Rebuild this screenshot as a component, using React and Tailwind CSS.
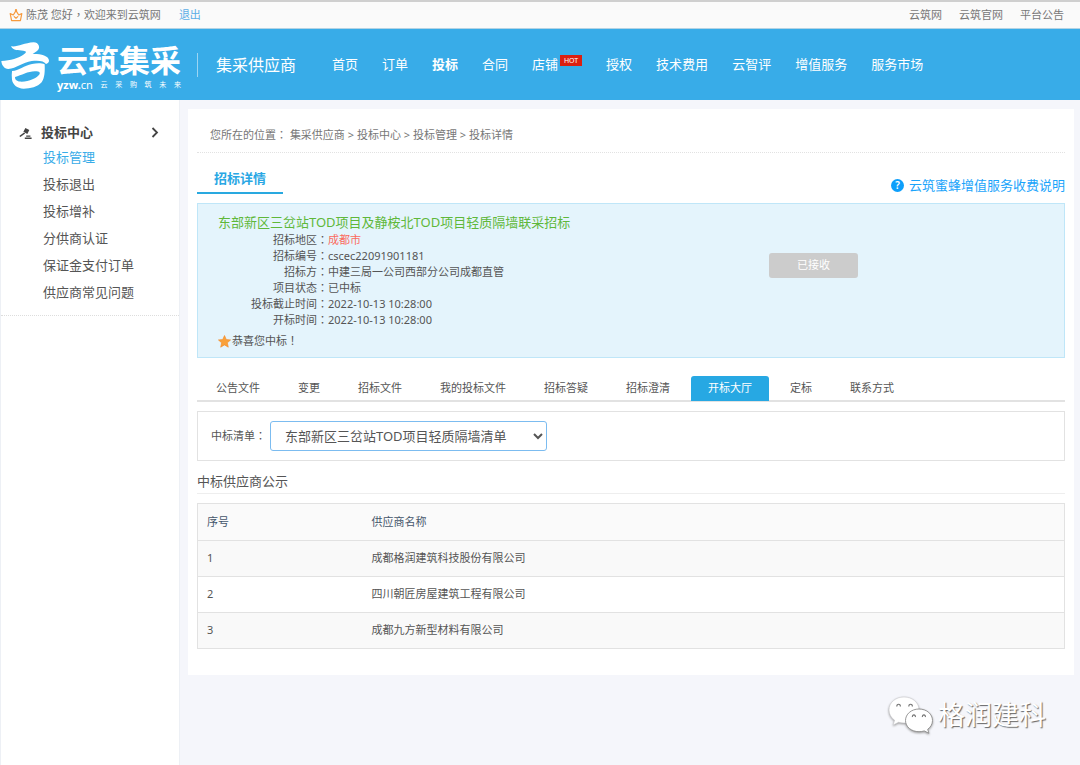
import React, { useState } from "react";

const navItems = [
  { label: "首页" },
  { label: "订单" },
  { label: "投标", active: true },
  { label: "合同" },
  { label: "店铺", hot: true },
  { label: "授权" },
  { label: "技术费用" },
  { label: "云智评" },
  { label: "增值服务" },
  { label: "服务市场" },
];

const sideItems = ["投标管理", "投标退出", "投标增补", "分供商认证", "保证金支付订单", "供应商常见问题"];

const crumbs = ["集采供应商", "投标中心", "投标管理", "投标详情"];

const details = [
  { label: "招标地区", value: "成都市", red: true },
  { label: "招标编号", value: "cscec22091901181" },
  { label: "招标方", value: "中建三局一公司西部分公司成都直管" },
  { label: "项目状态", value: "已中标" },
  { label: "投标截止时间", value: "2022-10-13 10:28:00" },
  { label: "开标时间", value: "2022-10-13 10:28:00" },
];

const tabs = ["公告文件", "变更", "招标文件", "我的投标文件", "招标答疑", "招标澄清", "开标大厅", "定标", "联系方式"];

const suppliers = ["成都格润建筑科技股份有限公司", "四川朝匠房屋建筑工程有限公司", "成都九方新型材料有限公司"];

// punctuation centred in its full-width cell
function Mark({ children }) {
  return <span lang="zh-TW" className="font-['Noto_Sans_CJK_TC',sans-serif] leading-none">{children}</span>;
}

function CrownIcon() {
  return (
    <svg className="w-[14px] h-[13px]" viewBox="0 0 14 13" fill="none" stroke="#f79a3e" strokeWidth="1.2" strokeLinejoin="round" strokeLinecap="round">
      <path d="M2.6 11.6 1.2 4.6 4.3 6 7 1.6 9.7 6l3.1-1.4-1.4 7z" />
      <path d="M5.2 7.6 7 9.2l1.8-1.6" />
      <circle cx="7" cy="1.3" r=".6" />
    </svg>
  );
}

function LogoMark() {
  return (
    <svg className="w-[49px] h-[48px] shrink-0" viewBox="0 124 147 144" fill="#fff">
      <path d="M33 140c20 3 38-10 68-12 8 0 12 4 15 9 3 7 1 12-5 17l-13 9c20-1 49 4 49 20 0 5-4 8-9 10-5-9-22-12-43-9-27 4-46 22-70 24C12 207 5 196 4 184c28-1 51-8 68-20 9-7 7-10-2-11-16-1-30 0-37-13z" />
      <path
        fillRule="evenodd"
        d="M36 214c21-1 36-16 60-21 15-3 29-3 38 1 1 22 0 41-9 54-12 14-34 19-54 19-20-1-33-13-35-27-1-9-1-18 0-26zm9 18c0 10 8 14 20 14 23-1 46-10 54-23 2-7-4-9-14-8-22 0-40 12-60 17z"
      />
    </svg>
  );
}

function GavelIcon() {
  return (
    <svg className="w-[13px] h-[13px]" viewBox="0 0 13 13" fill="#444">
      <path d="M6.4.9 10.3 3 8.3 7 4.4 4.8z" />
      <path d="M5 5.6 6.2 6.4 1.4 10 .3 8.9z" />
      <path d="M7.2 8.4h4.2v1.4H7.2zM5.8 10.6h6.8V12H5.8z" />
    </svg>
  );
}

function StarIcon() {
  return (
    <svg className="w-[13px] h-[13px]" viewBox="0 0 13 13">
      <path d="m6.5.5 1.8 4 4.3.4-3.2 2.9.9 4.4-3.8-2.3-3.8 2.3.9-4.4L.4 4.9l4.3-.4z" fill="#f9a13a" stroke="#f4892a" strokeWidth=".6" />
    </svg>
  );
}

function WechatIcon() {
  return (
    <svg className="w-[46px] h-[39px] drop-shadow-[0_1px_1px_#999]" viewBox="0 0 46 39">
      <path d="M16 1c8.500 0 15 5.600 15 13S24.500 27 16 27c-2 0-3.800-.3-5.400-.8L5.200 29l1.400-4.800C3.200 21.800 1 18.200 1 14 1 6.600 7.500 1 16 1z" fill="#fff" stroke="#c4c4c8" strokeWidth=".5" />
      <path d="M31 13c7.800 0 13.500 5.200 13.500 11.500 0 3.800-2 6.800-4.800 8.800l1.200 4-4.600-2.400c-1.600.6-3.400.8-5.300.8-7.800 0-13.500-5-13.500-11.200S23.200 13 31 13z" fill="#fff" stroke="#8c8c8c" strokeWidth=".9" />
      <g fill="none" stroke="#777" strokeWidth="1.2">
        <path d="M9 10.500a1.700 1.700 0 1 1 3.200 0M21 10.500a1.700 1.700 0 1 1 3.200 0M24.500 21a1.500 1.500 0 1 1 2.800 0M34.500 21a1.500 1.500 0 1 1 2.800 0" />
      </g>
    </svg>
  );
}

function TopBar() {
  return (
    <div className="flex h-[29px] items-center justify-between border-t-2 border-b border-t-[#cfcfcf] border-b-[#b3d3e4] bg-[#fafafa] pl-[9px] pr-4 text-[11px] text-[#777]">
      <div className="flex items-center">
        <CrownIcon />
        <span className="ml-[3px]">陈茂 您好<Mark>，</Mark>欢迎来到云筑网</span>
        <a href="#" className="ml-[18px] text-[#5caee6]">退出</a>
      </div>
      <div className="flex gap-[17px]">
        <a href="#">云筑网</a>
        <a href="#">云筑官网</a>
        <a href="#">平台公告</a>
      </div>
    </div>
  );
}

function Header() {
  return (
    <header className="flex h-[71px] items-center bg-[#38ace8] text-white">
      <LogoMark />
      <div className="ml-2 mt-[6px] w-[124px] font-['Liberation_Sans','Noto_Sans_CJK_SC',sans-serif]">
        <div className="text-[31px] leading-[34px] font-bold whitespace-nowrap">云筑集采</div>
        <div className="flex h-3 items-center justify-between text-[7px] leading-3">
          <span className="font-['Noto_Sans',sans-serif] text-[11px] font-bold">yzw.<span className="font-normal">cn</span></span>
          {["云", "采", "购", "筑", "未", "来"].map(c => (
            <span key={c}>{c}</span>
          ))}
        </div>
      </div>
      <div className="ml-4 h-6 w-px bg-[#9bd5f3]" />
      <div className="ml-[18px] text-[16px] whitespace-nowrap">集采供应商</div>
      <nav className="ml-9 flex items-center gap-6 text-[13px] whitespace-nowrap">
        {navItems.map(item => (
          <a key={item.label} href="#" className={`flex ${item.active ? "font-bold" : ""}`}>
            {item.label}
            {item.hot && (
              <span className="ml-0.5 h-[11px] w-[22px] bg-[#dc1f10] text-center text-[7px] leading-[11px]">HOT</span>
            )}
          </a>
        ))}
      </nav>
    </header>
  );
}

function Sidebar() {
  return (
    <aside className="w-[180px] shrink-0 border-x border-[#edf0f5] bg-white pt-[22px]">
      <div className="flex h-[22px] items-center pl-[18px] pr-5 text-[13px] font-semibold text-[#444]">
        <GavelIcon />
        <span className="ml-[9px] flex-1">投标中心</span>
        <svg className="w-2 h-3" viewBox="0 0 8 12" fill="none" stroke="#444" strokeWidth="1.8">
          <path d="m1.500 1 4.500 4.500L1.500 10" />
        </svg>
      </div>
      <ul className="border-b border-dotted border-[#ddd] pb-[9px] text-[13px] leading-[27px]">
        {sideItems.map((item, i) => (
          <li key={item} className="pl-[42px]">
            <a href="#" className={i === 0 ? "text-[#38ace8]" : "text-[#555]"}>{item}</a>
          </li>
        ))}
      </ul>
    </aside>
  );
}

function BidInfo() {
  return (
    <section className="mt-[9px] flex h-[155px] border border-[#bfe6f8] bg-[#e4f4fc]">
      <div className="w-[571px] pl-5 pt-[9px]">
        <h2 className="text-[13px] leading-[18px] text-[#5fb83a]">东部新区三岔站TOD项目及静桉北TOD项目轻质隔墙联采招标</h2>
        <dl className="mt-px text-[11px] leading-4">
          {details.map(d => (
            <div key={d.label} className="flex h-4">
              <dt className="w-[110px] text-right">{d.label}<Mark>：</Mark></dt>
              <dd className={d.red ? "text-[#fb6a5c]" : ""}>{d.value}</dd>
            </div>
          ))}
        </dl>
        <p className="mt-[5px] flex h-4 items-center text-[11px] leading-4">
          <StarIcon />
          <span className="ml-px">恭喜您中标<Mark>！</Mark></span>
        </p>
      </div>
      <button className="mt-[49px] h-[25px] w-[89px] rounded-[3px] bg-[#ccc] text-[11px] text-white">已接收</button>
    </section>
  );
}

export default function App() {
  const [tab, setTab] = useState("开标大厅");

  return (
    <div className="flex min-h-screen flex-col bg-[#f5f6fb] font-['Noto_Sans','Noto_Sans_CJK_SC',sans-serif] text-[#555]">
      <TopBar />
      <Header />
      <div className="flex flex-1">
        <Sidebar />
        <div className="min-w-0 flex-1 pl-2 pr-[6px] pt-[9px]">
          <main className="bg-white pb-[26px] pl-[9px] pr-[9px]">
            <div className="h-11 border-b border-dotted border-[#e2e2e2] pl-[13px] pt-[18px] text-[11px] leading-4 text-[#777]">
              您所在的位置<Mark>：</Mark> {crumbs.join(" > ")}
            </div>

            <div className="flex h-[41px] items-end justify-between">
              <h1 className="border-b-2 border-[#29a9e0] px-[17px] pb-[5px] text-[13px] leading-[18px] font-semibold text-[#29a7e4]">招标详情</h1>
              <a href="#" className="flex items-center gap-[5px] text-[13px] leading-[18px] text-[#1ba4fb]">
                <span className="h-[13px] w-[13px] rounded-full bg-[#0d9ffb] text-center text-[10px] leading-[13px] font-semibold text-white">?</span>
                云筑蜜蜂增值服务收费说明
              </a>
            </div>

            <BidInfo />

            <div className="mt-[18px] flex gap-1 border-b-2 border-[#e2e2e2] pl-0.5">
              {tabs.map(t => (
                <button
                  key={t}
                  onClick={() => setTab(t)}
                  className={`-mb-px h-[25px] rounded-t-[3px] px-[17px] text-[11px] whitespace-nowrap ${
                    t === tab ? "bg-[#27a8e3] text-white" : ""
                  }`}
                >
                  {t}
                </button>
              ))}
            </div>

            <div className="mt-[9px] flex h-[50px] items-center border border-[#e2e2e2] pl-[13px]">
              <label htmlFor="list" className="text-[11px]">中标清单<Mark>：</Mark></label>
              <select id="list" className="ml-1 h-[30px] w-[277px] rounded-[3px] border border-[#7cbcf0] bg-white pl-[10px] text-[13px] text-[#555]">
                <option>东部新区三岔站TOD项目轻质隔墙清单</option>
              </select>
            </div>

            <h3 className="mt-[10px] border-b border-[#eee] pb-[2px] text-[13px] leading-5">中标供应商公示</h3>

            <table className="mt-[9px] w-full border-collapse border border-[#e2e2e2] text-[11px]">
              <thead>
                <tr className="h-[37px] bg-[#fafafa] text-left text-[#45566b]">
                  <th className="w-[165px] pl-[9px] font-normal">序号</th>
                  <th className="pl-[9px] font-normal">供应商名称</th>
                </tr>
              </thead>
              <tbody>
                {suppliers.map((name, i) => (
                  <tr key={name} className="h-9 border-t border-[#e2e2e2] odd:bg-[#f9f9f9]">
                    <td className="pl-[9px]">{i + 1}</td>
                    <td className="pl-[9px]">{name}</td>
                  </tr>
                ))}
              </tbody>
            </table>
          </main>

          <footer className="flex items-center justify-end gap-1 pt-5 pr-7">
            <WechatIcon />
            <span className="text-[27px] leading-10 text-white [text-shadow:1px_1px_1px_#666]">格润建科</span>
          </footer>
        </div>
      </div>
    </div>
  );
}
